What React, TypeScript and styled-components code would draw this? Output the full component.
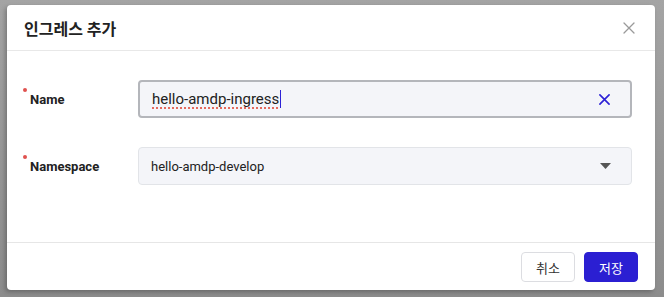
import React from 'react';
import styled, { createGlobalStyle } from 'styled-components';

const GlobalStyle = createGlobalStyle`
  html, body {
    margin: 0;
    padding: 0;
    background: #999999;
  }
  body {
    font-family: Roboto, "Noto Sans CJK KR", "Noto Sans", sans-serif;
  }
`;

const Backdrop = styled.div`
  width: 664px;
  height: 297px;
  box-sizing: border-box;
  padding: 5px 9px 7px 7px;
  background: linear-gradient(180deg, #a4a4a4 0%, #959595 60%, #8c8c8c 100%);
`;

const Modal = styled.div`
  height: 100%;
  background: #ffffff;
  border-radius: 4px;
  display: flex;
  flex-direction: column;
  box-shadow: -2px 2px 4px rgba(0, 0, 0, 0.25);
  overflow: hidden;
`;

const Header = styled.div`
  height: 45px;
  flex: none;
  display: flex;
  align-items: center;
  justify-content: space-between;
  padding: 0 20px 0 17px;
  border-bottom: 1px solid #e8e8e8;
`;

const Title = styled.h2`
  margin: 0;
  font-size: 16px;
  font-weight: 700;
  color: #222222;
`;

const CloseButton = styled.button`
  border: none;
  background: none;
  padding: 0;
  width: 12px;
  height: 12px;
  display: flex;
  cursor: pointer;
`;

const Body = styled.div`
  flex: 1;
  display: flex;
  flex-direction: column;
  gap: 29px;
  padding: 29px 23px 0 15px;
`;

const Row = styled.div`
  display: grid;
  grid-template-columns: 116px 1fr;
  align-items: center;
`;

const Label = styled.label`
  position: relative;
  padding-left: 8px;
  font-size: 13px;
  font-weight: 700;
  color: #222222;
  &::before {
    content: '';
    position: absolute;
    left: 1px;
    top: -4px;
    width: 4px;
    height: 4px;
    border-radius: 50%;
    background: #e0524f;
  }
`;

const Field = styled.div<{ $focused?: boolean }>`
  height: 38px;
  box-sizing: border-box;
  display: flex;
  align-items: center;
  justify-content: space-between;
  padding: 0 20px 0 12px;
  background: #f4f5f9;
  border: ${p => (p.$focused ? '2px solid #b4b6bb' : '1px solid #e2e4e8')};
  border-radius: 4px;
`;

const FieldText = styled.span<{ $size: number }>`
  font-size: ${p => p.$size}px;
  color: #222222;
  display: flex;
  align-items: center;
`;

const Misspelled = styled.span`
  text-decoration: underline dotted #e46a5e;
  text-decoration-thickness: 2px;
  text-underline-offset: 3px;
`;

const Caret = styled.span`
  display: inline-block;
  width: 1px;
  height: 18px;
  background: #2d22d6;
  margin-left: 1px;
`;

const Footer = styled.div`
  height: 48px;
  flex: none;
  box-sizing: border-box;
  border-top: 1px solid #e6e6e6;
  display: flex;
  justify-content: flex-end;
  align-items: flex-start;
  gap: 9px;
  padding: 9px 17px 0 0;
`;

const Button = styled.button<{ $primary?: boolean }>`
  width: 54px;
  height: 30px;
  border-radius: 4px;
  font-family: inherit;
  font-size: 13px;
  cursor: pointer;
  border: 1px solid ${p => (p.$primary ? '#2b1fd2' : '#dcdde1')};
  background: ${p => (p.$primary ? '#2b1fd2' : '#ffffff')};
  color: ${p => (p.$primary ? '#ffffff' : '#333333')};
`;

const CloseIcon = ({ color, size, stroke }: { color: string; size: number; stroke: number }) => (
  <svg width={size} height={size} viewBox="0 0 12 12">
    <path d="M1 1 L11 11 M11 1 L1 11" stroke={color} strokeWidth={stroke} strokeLinecap="round" />
  </svg>
);

const Caretdown = () => (
  <svg width="11" height="6" viewBox="0 0 11 6">
    <path d="M0 0 H11 L5.5 6 Z" fill="#555555" />
  </svg>
);

export default function App() {
  return (
    <>
      <GlobalStyle />
      <Backdrop>
        <Modal>
          <Header>
            <Title>인그레스 추가</Title>
            <CloseButton aria-label="close">
              <CloseIcon color="#9a9a9a" size={12} stroke={1.3} />
            </CloseButton>
          </Header>
          <Body>
            <Row>
              <Label>Name</Label>
              <Field $focused>
                <FieldText $size={15}>
                  <Misspelled>hello-amdp-ingress</Misspelled>
                  <Caret />
                </FieldText>
                <CloseIcon color="#2d22d6" size={11} stroke={1.8} />
              </Field>
            </Row>
            <Row>
              <Label>Namespace</Label>
              <Field>
                <FieldText $size={13}>hello-amdp-develop</FieldText>
                <Caretdown />
              </Field>
            </Row>
          </Body>
          <Footer>
            <Button>취소</Button>
            <Button $primary>저장</Button>
          </Footer>
        </Modal>
      </Backdrop>
    </>
  );
}
